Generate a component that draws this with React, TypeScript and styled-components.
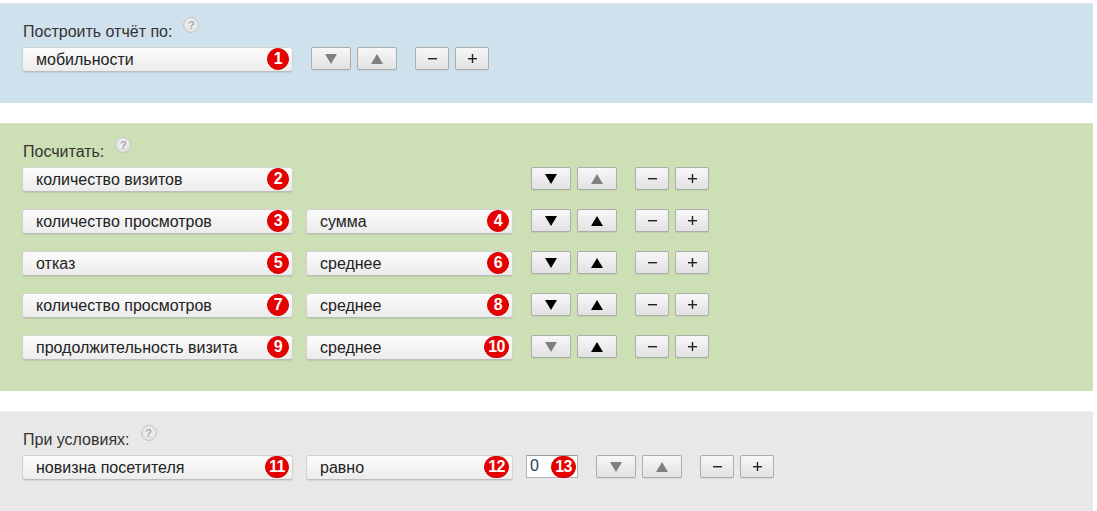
import React from "react";
import styled, { createGlobalStyle } from "styled-components";

const GlobalStyle = createGlobalStyle`
  body {
    margin: 0;
    background: #ffffff;
    font-family: "Liberation Sans", Arial, sans-serif;
  }
`;

type Tone = "blue" | "green" | "grey";

const tones: Record<Tone, { bg: string; edge: string }> = {
  blue: { bg: "#cfe1ed", edge: "#dbe8f1" },
  green: { bg: "#cddfb5", edge: "#d8e6c4" },
  grey: { bg: "#e8e8e8", edge: "#efefef" },
};

type RowData = {
  field: string;
  fieldNo: number;
  func?: string;
  funcNo?: number;
  down: boolean;
  up: boolean;
};

const metrics: RowData[] = [
  { field: "количество визитов", fieldNo: 2, down: true, up: false },
  { field: "количество просмотров", fieldNo: 3, func: "сумма", funcNo: 4, down: true, up: true },
  { field: "отказ", fieldNo: 5, func: "среднее", funcNo: 6, down: true, up: true },
  { field: "количество просмотров", fieldNo: 7, func: "среднее", funcNo: 8, down: true, up: true },
  { field: "продолжительность визита", fieldNo: 9, func: "среднее", funcNo: 10, down: false, up: true },
];

const Arrow = ({ dir, active }: { dir: "down" | "up"; active: boolean }) => (
  <svg width="12" height="10" viewBox="0 0 12 10">
    <polygon
      points={dir === "down" ? "0,0 12,0 6,10" : "6,0 12,10 0,10"}
      fill={active ? "#000000" : "#808080"}
    />
  </svg>
);

const Minus = () => (
  <svg width="9" height="9" viewBox="0 0 9 9">
    <rect x="0" y="4" width="9" height="1.4" fill="#222" />
  </svg>
);

const Plus = () => (
  <svg width="9" height="9" viewBox="0 0 9 9">
    <rect x="0" y="4" width="9" height="1.4" fill="#222" />
    <rect x="3.8" y="0" width="1.4" height="9" fill="#222" />
  </svg>
);

const Controls = ({ down, up }: { down: boolean; up: boolean }) => (
  <ControlGroup>
    <Pair>
      <Button $wide>
        <Arrow dir="down" active={down} />
      </Button>
      <Button $wide>
        <Arrow dir="up" active={up} />
      </Button>
    </Pair>
    <Pair>
      <Button>
        <Minus />
      </Button>
      <Button>
        <Plus />
      </Button>
    </Pair>
  </ControlGroup>
);

const Select = ({ value, no, $short }: { value: string; no: number; $short?: boolean }) => (
  <SelectBox $short={$short}>
    {value}
    <Badge>{no}</Badge>
  </SelectBox>
);

const Heading = ({ children }: { children: React.ReactNode }) => (
  <Title>
    {children}
    <Help>?</Help>
  </Title>
);

const App = () => {
  return (
    <Page>
      <GlobalStyle />
      <Panel $tone="blue">
        <Heading>Построить отчёт по:</Heading>
        <Row>
          <Select value="мобильности" no={1} />
          <Controls down={false} up={false} />
        </Row>
      </Panel>

      <Panel $tone="green">
        <Heading>Посчитать:</Heading>
        <Rows>
          {metrics.map((m, i) => (
            <Row key={i}>
              <Select value={m.field} no={m.fieldNo} />
              {m.func ? (
                <Select value={m.func} no={m.funcNo!} $short />
              ) : (
                <Spacer />
              )}
              <Controls down={m.down} up={m.up} />
            </Row>
          ))}
        </Rows>
      </Panel>

      <Panel $tone="grey">
        <Heading>При условиях:</Heading>
        <Row>
          <Select value="новизна посетителя" no={11} />
          <Select value="равно" no={12} $short />
          <ValueBox>
            0<Badge $inInput>13</Badge>
          </ValueBox>
          <Controls down={false} up={false} />
        </Row>
      </Panel>
    </Page>
  );
};

export default App;

const Page = styled.div`
  width: 1093px;
  padding-top: 3px;
  display: flex;
  flex-direction: column;
  gap: 20px;
`;

const Panel = styled.section<{ $tone: Tone }>`
  background: ${(p) => tones[p.$tone].bg};
  border-top: 1px solid ${(p) => tones[p.$tone].edge};
  padding: 19px 22px 31px;
`;

const Title = styled.div`
  display: flex;
  align-items: flex-start;
  height: 18px;
  line-height: 17px;
  font-size: 16px;
  color: #333333;
  margin-bottom: 6px;
  padding-left: 1px;
`;

const Help = styled.span`
  width: 14px;
  height: 14px;
  margin-left: 11px;
  margin-top: -6px;
  border-radius: 50%;
  border: 1px solid #c6c6c6;
  background: radial-gradient(circle at 50% 40%, #f2f2f2, #dcdcdc);
  color: #a8a8a8;
  font-size: 11px;
  font-weight: bold;
  line-height: 14px;
  text-align: center;
`;

const Rows = styled.div`
  display: flex;
  flex-direction: column;
  gap: 17px;
`;

const Row = styled.div`
  display: flex;
  align-items: flex-start;
  gap: 13px;
`;

const SelectBox = styled.div<{ $short?: boolean }>`
  position: relative;
  box-sizing: border-box;
  width: ${(p) => (p.$short ? "207px" : "271px")};
  height: 25px;
  padding-left: 13px;
  border: 1px solid #d2d2d2;
  border-bottom-color: #bdbdbd;
  border-radius: 3px;
  background: linear-gradient(#fbfbfb, #ececec);
  box-shadow: 0 1px 1px rgba(0, 0, 0, 0.08);
  font-size: 16px;
  line-height: 23px;
  color: #222222;
  white-space: nowrap;
`;

const Spacer = styled.div`
  width: 207px;
`;

const Badge = styled.span<{ $inInput?: boolean }>`
  position: absolute;
  right: ${(p) => (p.$inInput ? "1px" : "3px")};
  top: 0;
  box-sizing: border-box;
  min-width: 22px;
  height: 22px;
  padding: 0 3px;
  border-radius: 11px;
  background: #e60000;
  border: 1px solid #d40000;
  color: #ffffff;
  font-size: 16px;
  font-weight: bold;
  line-height: 20px;
  text-align: center;
  letter-spacing: -0.5px;
`;

const ValueBox = styled.div`
  position: relative;
  box-sizing: border-box;
  width: 52px;
  height: 23px;
  padding-left: 3px;
  border: 1px solid #b4b4b4;
  border-top-color: #9c9c9c;
  background: #ffffff;
  font-size: 16px;
  line-height: 20px;
  color: #2c3e50;
`;

const ControlGroup = styled.div`
  display: flex;
  gap: 18px;
  margin-left: 5px;
`;

const Pair = styled.div`
  display: flex;
  gap: 6px;
`;

const Button = styled.button<{ $wide?: boolean }>`
  box-sizing: border-box;
  width: ${(p) => (p.$wide ? "40px" : "34px")};
  height: 23px;
  padding: 0;
  display: flex;
  align-items: center;
  justify-content: center;
  border: 1px solid #acacac;
  border-radius: 2px;
  background: linear-gradient(#f7f7f7, #e2e2e2);
  box-shadow: 0 1px 0 rgba(0, 0, 0, 0.06);
  cursor: pointer;
`;
